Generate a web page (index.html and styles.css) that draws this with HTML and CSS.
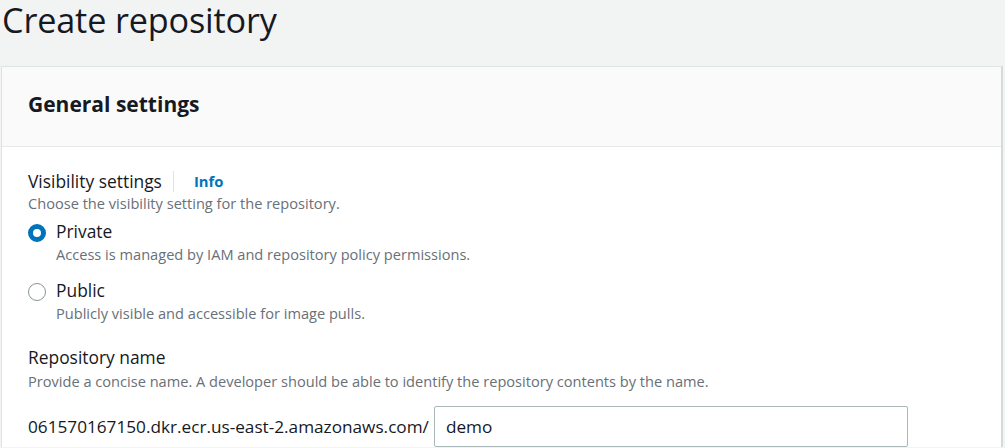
FILE: index.html
```html
<!DOCTYPE html>
<html>
<head>
<meta charset="utf-8">
<link rel="stylesheet" href="styles.css">
</head>
<body>
<h1 class="title">Create repository</h1>
<div class="card">
  <div class="card-header"><h2>General settings</h2></div>
  <div class="card-body">
    <div class="field">
      <div class="label-row"><span class="label">Visibility settings</span><span class="sep"></span><a class="info">Info</a></div>
      <div class="desc">Choose the visibility setting for the repository.</div>
      <div class="radio-group">
        <div class="radio">
          <span class="dot checked"></span>
          <div class="radio-text">
            <div class="radio-label">Private</div>
            <div class="desc">Access is managed by IAM and repository policy permissions.</div>
          </div>
        </div>
        <div class="radio">
          <span class="dot"></span>
          <div class="radio-text">
            <div class="radio-label">Public</div>
            <div class="desc">Publicly visible and accessible for image pulls.</div>
          </div>
        </div>
      </div>
    </div>
    <div class="field">
      <div class="label">Repository name</div>
      <div class="desc name-desc">Provide a concise name. A developer should be able to identify the repository contents by the name.</div>
      <div class="name-row">
        <span class="prefix">061570167150.dkr.ecr.us-east-2.amazonaws.com/</span>
        <div class="input">demo</div>
      </div>
    </div>
  </div>
</div>
</body>
</html>
```
FILE: styles.css
```css
* { box-sizing: border-box; }
html, body { margin: 0; padding: 0; }
body {
  background: #f2f3f3;
  font-family: "Open Sans", "Noto Sans", sans-serif;
  color: #16191f;
  width: 1005px;
  height: 448px;
  overflow: hidden;
}
.title {
  margin: 0;
  padding: 0 0 0 2px;
  font-weight: 400;
  font-size: 34.2px;
  line-height: 40px;
  height: 66px;
  letter-spacing: -0.15px;
}
.card {
  margin-left: 1px;
  width: 1002px;
  background: #fff;
  border: 1px solid #dfe3e3;
  border-right: 2px solid #d5dbdb;
  border-bottom: none;
}
.card-header {
  background: #fafafa;
  border-bottom: 1px solid #e6e9e9;
  height: 80px;
  padding: 22px 26px 0;
}
.card-header h2 {
  margin: 0;
  font-size: 21px;
  line-height: 30px;
  font-weight: 700;
}
.card-body {
  padding: 23px 26px 0;
}
.label-row { display: flex; align-items: center; height: 22px; }
.label { font-size: 17.4px; line-height: 22px; display: block; }
.sep {
  width: 1px; height: 21px; background: #e0e3e3;
  margin: 0 20px 0 11px;
}
.info {
  color: #0073bb; font-weight: 700; font-size: 14.8px; line-height: 22px;
}
.desc {
  font-size: 14.6px; line-height: 20px; color: #687078;
}
.label-row + .desc { margin-top: 1px; }
.radio-group { margin-top: 6px; }
.radio { display: flex; align-items: flex-start; }
.radio + .radio { margin-top: 14px; }
.dot {
  width: 18px; height: 18px; border-radius: 50%;
  border: 1.5px solid #879596;
  margin-top: 4.6px;
  flex: none;
}
.dot.checked { border: 5.5px solid #0073bb; }
.radio-text { margin-left: 10px; }
.radio-label { font-size: 17.4px; line-height: 24px; }
.radio-label + .desc { margin-top: 1px; }
.field + .field { margin-top: 23px; }
.name-desc { margin-top: 3px; }
.name-row {
  display: flex; align-items: center; margin-top: 15px;
}
.prefix { font-size: 17.2px; }
.input {
  margin-left: 5px;
  width: 474px; height: 41px;
  border: 1px solid #aab7b8;
  border-radius: 2px;
  padding: 0 11px;
  font-size: 17.2px;
  line-height: 39px;
}
```
